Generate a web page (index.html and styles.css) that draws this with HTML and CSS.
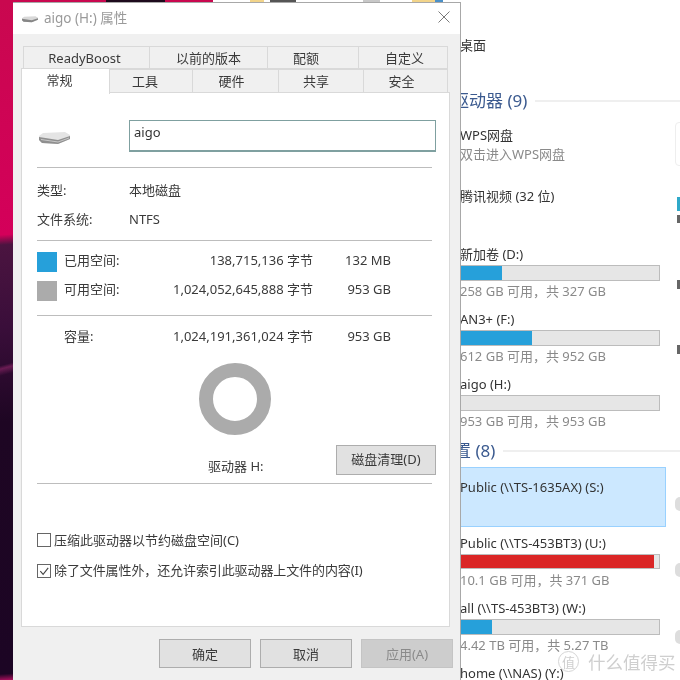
FILE: index.html
```html
<!DOCTYPE html>
<html lang="zh-CN">
<head>
<meta charset="utf-8">
<title>aigo (H:) 属性</title>
<link rel="stylesheet" href="styles.css">
</head>
<body>
<div class="desktop">
  <div class="topstrip">
    <span class="ts ts-pink"></span><span class="ts ts-dark"></span><span class="ts ts-pink2"></span>
    <span class="ts ts-tan1"></span><span class="ts ts-txt"></span><span class="ts ts-grey"></span><span class="ts ts-tan2"></span><span class="ts ts-blue"></span>
  </div>

  <section class="explorer">
    <div class="line first">桌面</div>
    <div class="head head-drives"><span class="head-label">驱动器 (9)</span><span class="head-rule"></span></div>
    <div class="line wps">WPS网盘</div>
    <div class="sub sub-tight">双击进入WPS网盘</div>
    <div class="line tx">腾讯视频 (32 位)</div>
    <div class="line vol">新加卷 (D:)</div>
    <div class="bar"><div class="fill" style="width:41px"></div></div>
    <div class="sub">258 GB 可用，共 327 GB</div>
    <div class="line item">AN3+ (F:)</div>
    <div class="bar"><div class="fill" style="width:71px"></div></div>
    <div class="sub">612 GB 可用，共 952 GB</div>
    <div class="line item">aigo (H:)</div>
    <div class="bar"></div>
    <div class="sub">953 GB 可用，共 953 GB</div>
    <div class="head head-net"><span class="head-label">位置 (8)</span><span class="head-rule"></span></div>
    <div class="selected"><div class="line">Public (\\TS-1635AX) (S:)</div></div>
    <div class="line pub">Public (\\TS-453BT3) (U:)</div>
    <div class="bar bar-thin"><div class="fill fill-red" style="width:193px"></div></div>
    <div class="sub sub-gap">10.1 GB 可用，共 371 GB</div>
    <div class="line item">all (\\TS-453BT3) (W:)</div>
    <div class="bar"><div class="fill" style="width:31px"></div></div>
    <div class="sub">4.42 TB 可用，共 5.27 TB</div>
    <div class="line item">home (\\NAS) (Y:)</div>

    <span class="stub stub-card"></span>
    <span class="stub stub-blue"></span>
    <span class="stub stub-g1"></span>
    <span class="stub stub-g2"></span>
    <span class="stub stub-g3"></span>
    <span class="stub stub-n1"></span>
    <span class="stub stub-n2"></span>
    <span class="stub stub-n3"></span>
  </section>

  <section class="dialog">
    <header class="titlebar">
      <svg class="title-icon" viewBox="0 0 31 13" width="16" height="7"><path d="M0 4 L4 1 L26 0 L31 3 L31 7 L19 12 L3 11 L0 8 Z" fill="#d8d8d8"/><path d="M0 5 L19 8 L31 4 L31 7 L19 12 L3 11 L0 8 Z" fill="#868686"/></svg>
      <span class="title-text">aigo (H:) 属性</span>
      <svg class="close" viewBox="0 0 12 12" width="12" height="12"><path d="M0.5 0.5 L11.5 11.5 M11.5 0.5 L0.5 11.5" stroke="#7a7a7a" stroke-width="1" fill="none"/></svg>
    </header>
    <div class="body">
      <div class="tabs">
        <div class="tabrow tabrow-back">
          <div class="tab t-ready">ReadyBoost</div>
          <div class="tab t-prev">以前的版本</div>
          <div class="tab t-quota">配额</div>
          <div class="tab t-custom">自定义</div>
        </div>
        <div class="tabrow tabrow-front">
          <div class="tab active">常规</div>
          <div class="tab t-tools">工具</div>
          <div class="tab t-hw">硬件</div>
          <div class="tab t-share">共享</div>
          <div class="tab t-sec">安全</div>
        </div>
      </div>
      <div class="panel">
        <div class="name-row">
          <svg class="drive" viewBox="0 0 31 13" width="31" height="13">
            <path d="M0 4 L4 1 L26 0 L31 3 L31 7 L19 12 L3 11 L0 8 Z" fill="#e4e4e4"/>
            <path d="M0 5 L19 8 L31 4 L31 7 L19 12 L3 11 L0 8 Z" fill="#8f8f8f"/>
            <path d="M2 7 L19 9.5 L30 5.5 L30 6.5 L19 10.5 L2 8 Z" fill="#c8c8c8"/>
          </svg>
          <div class="name-input">aigo</div>
        </div>
        <div class="sep sep-a"></div>
        <div class="info info-type"><span class="info-label">类型:</span><span>本地磁盘</span></div>
        <div class="info info-fs"><span class="info-label">文件系统:</span><span>NTFS</span></div>
        <div class="sep sep-b"></div>
        <div class="space space-used"><span class="swatch sw-used"></span><span class="cell">已用空间:</span><span class="cell num">138,715,136 字节</span><span class="cell num">132 MB</span></div>
        <div class="space space-free"><span class="swatch sw-free"></span><span class="cell">可用空间:</span><span class="cell num">1,024,052,645,888 字节</span><span class="cell num">953 GB</span></div>
        <div class="sep sep-c"></div>
        <div class="space space-cap"><span></span><span class="cell">容量:</span><span class="cell num">1,024,191,361,024 字节</span><span class="cell num">953 GB</span></div>
        <div class="donut"></div>
        <div class="drive-row">
          <span class="drive-label">驱动器 H:</span>
          <div class="btn btn-clean">磁盘清理(D)</div>
        </div>
        <div class="sep sep-d"></div>
        <label class="check check-a"><span class="box"></span><span>压缩此驱动器以节约磁盘空间(C)</span></label>
        <label class="check check-b"><span class="box"><svg viewBox="0 0 14 14" width="13" height="13"><path d="M2.5 6.5 L5.5 10 L11 3" stroke="#444" stroke-width="1.2" fill="none"/></svg></span><span class="check-text">除了文件属性外，还允许索引此驱动器上文件的内容(I)</span></label>
      </div>
      <footer class="footer">
        <div class="btn btn-f">确定</div>
        <div class="btn btn-f">取消</div>
        <div class="btn btn-f btn-off">应用(A)</div>
      </footer>
    </div>
  </section>

  <div class="mark"><span class="mark-c">值</span><span>什么值得买</span></div>
</div>
</body>
</html>
```
FILE: styles.css
```css
* { box-sizing: border-box; }
html, body { margin: 0; padding: 0; }
body { width: 680px; height: 680px; overflow: hidden; background: #fff; }
.desktop {
  position: relative; width: 680px; height: 680px; overflow: hidden;
  font: 13px/20px "Noto Sans", "Noto Sans CJK SC", sans-serif;
  color: #3a3a3a;
  background: #fff;
  filter: blur(0.3px);
}
.topstrip { position: absolute; left: 0; top: 0; width: 680px; height: 3px; }
.ts { position: absolute; top: 0; height: 3px; }
.ts-pink { left: 0; width: 106px; background: #c9084f; }
.ts-dark { left: 106px; width: 59px; background: #1d0a1c; }
.ts-pink2 { left: 165px; width: 48px; background: #c9084f; }
.ts-tan1 { left: 250px; width: 14px; background: #f2d48a; }
.ts-txt { left: 270px; width: 26px; background: #555; height: 2px; }
.ts-grey { left: 363px; width: 17px; background: #c8c8c8; }
.ts-tan2 { left: 412px; width: 23px; background: #f2d48a; }
.ts-blue { left: 435px; width: 8px; background: #4a90c8; }

/* wallpaper strip, left of the dialog */
.desktop::before {
  content: ""; position: absolute; left: 0; top: 0; width: 14px; height: 680px;
  background:
    linear-gradient(165deg, transparent 0 53.5%, rgba(220,60,150,.35) 54%, transparent 55%),
    linear-gradient(176deg, #c9084f 0, #d4005a 34.5%, #4b1440 36%, #3a0e3a 48%, #1e0623 62%, #1c0524 99%, #b01060 100%);
}

/* explorer window on the right */
.explorer {
  position: absolute; left: 461px; top: 3px; width: 219px; height: 677px;
  overflow: hidden; background: #fff; padding-top: 32px; color: #333;
}
.line { height: 20px; line-height: 20px; white-space: nowrap; margin-left: -1px; }
.sub { height: 18px; line-height: 18px; color: #8a8a8a; white-space: nowrap; margin: 1px 0 0 -1px; }
.sub-tight { margin-top: 0; }
.wps { margin-top: 13px; }
.tx { margin-top: 23px; }
.vol { margin-top: 38px; }
.item { margin-top: 9px; }
.pub { margin-top: 6px; }
.head { height: 22px; display: flex; align-items: center; color: #3b5a8f; font-size: 17px; white-space: nowrap; }
.head-drives { margin-top: 35px; margin-left: -9px; }
.head-net { margin-top: 10px; margin-left: -24px; }
.head-rule { flex: 1; height: 2px; background: #efefef; margin-left: 8px; }
.selected {
  width: 205px; height: 60px; margin-top: 5px; padding-top: 9px;
  background: #cce8ff; border: 1px solid #99d1ff; border-left: 0;
}
.selected .line { margin-left: -1px; }
.bar { width: 199px; height: 16px; margin-top: 1px; background: #e6e6e6; border: 1px solid #bcbcbc; border-left: 0; }
.bar-thin { height: 15px; }
.fill { height: 100%; background: #26a0da; }
.fill-red { background: #da2626; }
.sub-gap { margin-top: 2px; }

.stub { position: absolute; }
.stub-card { left: 214px; top: 119px; width: 10px; height: 44px; border: 1px solid #eee; border-radius: 4px; }
.stub-blue { left: 216px; top: 194px; width: 5px; height: 14px; background: #2fa9c9; }
.stub-g1 { left: 216px; top: 212px; width: 5px; height: 8px; background: #666; }
.stub-g2 { left: 216px; top: 277px; width: 5px; height: 9px; background: #666; }
.stub-g3 { left: 216px; top: 342px; width: 5px; height: 9px; background: #666; }
.stub-n1 { left: 214px; top: 494px; width: 8px; height: 14px; background: #ddd; border-radius: 5px 0 0 5px; }
.stub-n2 { left: 214px; top: 560px; width: 8px; height: 14px; background: #ddd; border-radius: 5px 0 0 5px; }
.stub-n3 { left: 214px; top: 627px; width: 8px; height: 14px; background: #ddd; border-radius: 5px 0 0 5px; }

/* properties dialog */
.dialog {
  position: absolute; left: 13px; top: 2px; width: 448px; height: 680px;
  background: #f0f0f0; border-top: 1px solid #a8a8a8; border-right: 1px solid #a8a8a8;
  display: flex; flex-direction: column;
}
.titlebar {
  flex: none; height: 31px; background: #fff; display: flex; align-items: center;
  padding: 0 10px 2px 9px; color: #9a9a9a; font-size: 13.5px;
}
.title-icon { margin-right: 6px; margin-top: 3px; }
.title-text { flex: 1; }
.close { margin-top: -2px; }
.body { flex: 1; display: flex; flex-direction: column; padding: 12px 0 0 8px; }
.tabs { flex: none; height: 47px; display: flex; flex-direction: column; }
.tabrow { display: flex; height: 24px; }
.tabrow-back { margin-left: 2px; height: 23px; }
.tabrow-front { height: 24px; }
.tab {
  flex: none; height: 100%; display: flex; align-items: center; justify-content: center;
  background: #f0f0f0; border: 1px solid #d9d9d9; border-left: 0; color: #3a3a3a;
}
.tabrow-front .tab { padding-bottom: 1px; }
.tab.t-ready { border-left: 1px solid #d9d9d9; }
.t-ready { width: 127px; padding-right: 4px; }
.t-prev { width: 118px; }
.t-quota { width: 91px; padding-right: 14px; }
.t-custom { width: 89px; padding-left: 3px; }
.tabrow-front .active {
  width: 89px; height: 26px; margin-top: -1px; position: relative; z-index: 2;
  background: #fff; border: 1px solid #d9d9d9; border-bottom: 0; padding: 0 12px 4px 0;
}
.t-tools { width: 83px; padding-right: 12px; }
.t-hw { width: 86px; padding-right: 8px; }
.t-share { width: 85px; padding-right: 10px; }
.t-sec { width: 84px; padding-right: 8px; }

.panel {
  flex: none; width: 429px; height: 535px; background: #fff;
  border: 1px solid #d9d9d9; padding: 27px 0 0 15px; position: relative; z-index: 1;
  margin-top: -1px; display: flex; flex-direction: column;
}
.name-row { display: flex; align-items: center; height: 32px; }
.drive { margin: 4px 0 0 2px; }
.name-input {
  width: 307px; height: 32px; margin-left: 59px; border: 1px solid #7fa0a0; border-width: 1px 1px 2px 1px;
  padding: 0 4px; line-height: 22px; color: #333; background: #fff;
}
.sep { width: 395px; height: 1px; background: #bdbdbd; flex: none; }
.sep-a { margin-top: 15px; } .sep-b { margin-top: 11px; } .sep-c { margin-top: 14px; } .sep-d { margin-top: 8px; }
.info { display: flex; height: 20px; }
.info-label { width: 92px; }
.info-type { margin-top: 12px; } .info-fs { margin-top: 9px; }
.space { display: grid; grid-template-columns: 27px 80px 169px 78px; height: 20px; align-items: center; }
.cell { line-height: 16px; margin-bottom: 4px; }
.num { text-align: right; white-space: nowrap; }
.space-used { margin-top: 11px; } .space-free { margin-top: 9px; } .space-cap { margin-top: 12px; }
.swatch { width: 20px; height: 20px; display: block; }
.sw-used { background: #26a0da; }
.sw-free { background: #ababab; }
.donut {
  flex: none; width: 72px; height: 72px; margin: 15px 0 0 162px;
  border: 14px solid #ababab; border-radius: 50%;
}
.drive-row { display: flex; height: 30px; margin-top: 10px; align-items: flex-end; }
.drive-label { width: 299px; padding-left: 171px; line-height: 16px; padding-bottom: 1px; white-space: nowrap; }
.btn {
  display: flex; align-items: center; justify-content: center;
  background: #e1e1e1; border: 1px solid #adadad; color: #3a3a3a; white-space: nowrap;
}
.btn-clean { width: 100px; height: 30px; padding-bottom: 2px; }
.check { display: flex; align-items: center; height: 14px; white-space: nowrap; gap: 3px; }
.check-a { margin-top: 49px; }
.check-b { margin-top: 17px; }
.check-text { margin-bottom: 2px; letter-spacing: -0.1px; }
.box { width: 14px; height: 14px; border: 1px solid #666; background: #fff; display: block; flex: none; line-height: 0; }
.footer { display: flex; justify-content: flex-end; gap: 9px; padding: 12px 7px 0 0; flex: none; }
.btn-f { width: 92px; height: 29px; }
.btn-off { background: #cdcdcd; border-color: #c4c4c4; color: #8a8a8a; }

.mark {
  position: absolute; left: 558px; top: 651px; display: flex; align-items: center; gap: 9px;
  color: #cfcfcf; font-size: 17.5px; line-height: 20px; white-space: nowrap;
}
.mark-c { width: 21px; height: 21px; border: 1px solid #d5d5d5; border-radius: 50%; display: flex; align-items: center; justify-content: center; font-size: 13px; }
```
